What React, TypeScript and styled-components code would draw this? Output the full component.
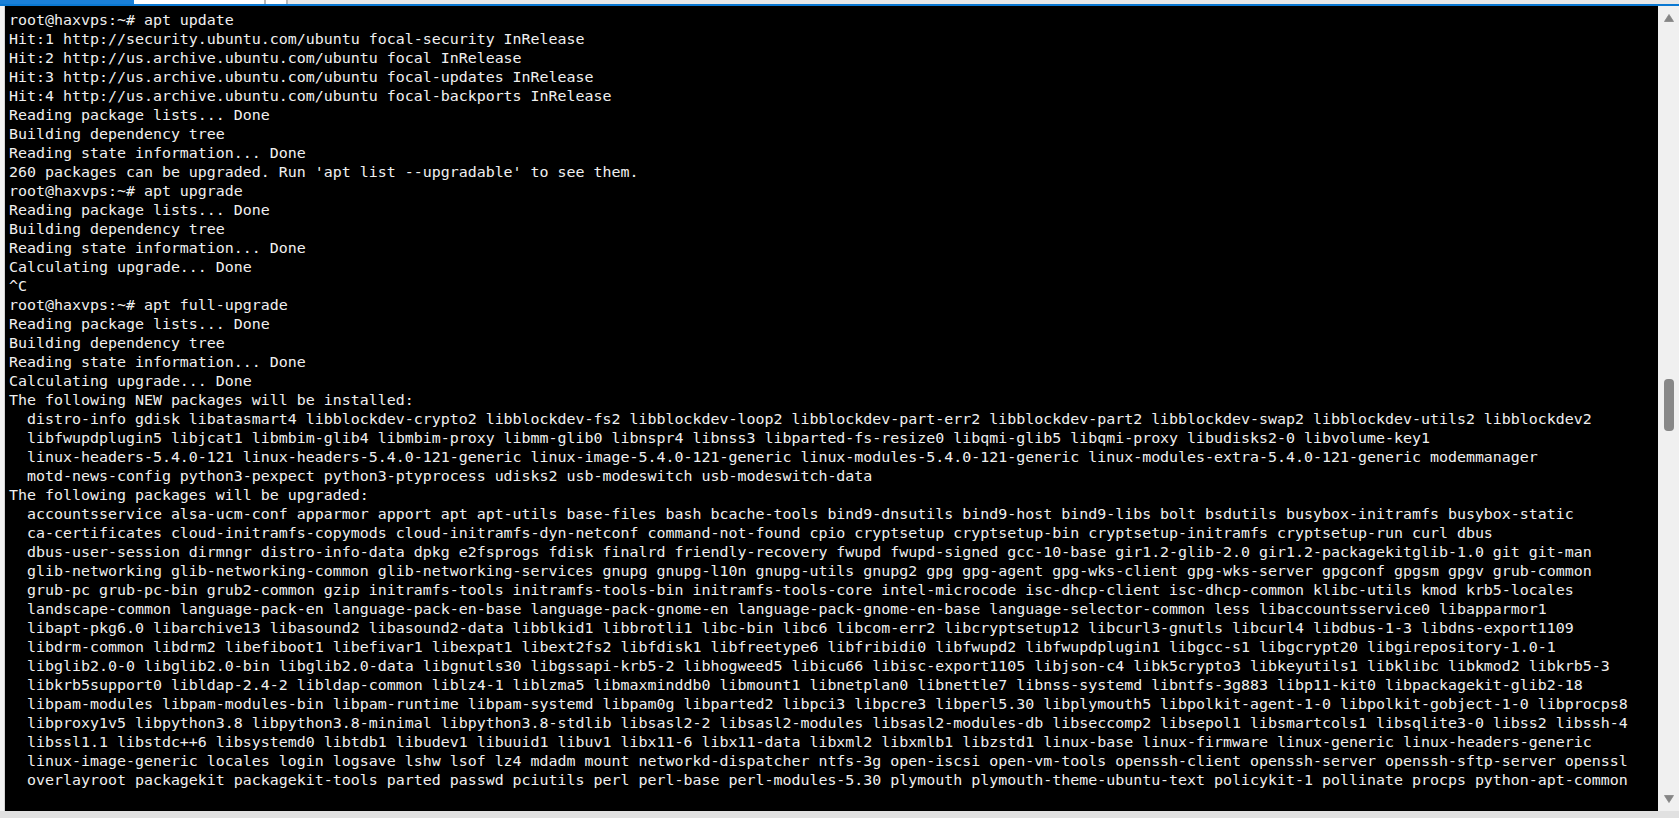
import React from "react";
import styled, { createGlobalStyle } from "styled-components";

const GlobalStyle = createGlobalStyle`
  html, body {
    margin: 0;
    padding: 0;
    width: 100%;
    height: 100%;
    overflow: hidden;
    background: #f0f0f0;
  }
  #root {
    height: 100%;
  }
`;

const Window = styled.div`
  display: flex;
  flex-direction: column;
  width: 1679px;
  height: 818px;
  background: #f0f0f0;
`;

const TabStrip = styled.div`
  display: flex;
  height: 4px;
  background: #e8e8e8;
  border-bottom: 2px solid #0a78d2;
`;

const Tab = styled.div<{ $active?: boolean; $w: number }>`
  width: ${(p) => p.$w}px;
  height: 100%;
  background: ${(p) => (p.$active ? "#1a80d8" : "#ffffff")};
  border-right: 2px solid ${(p) => (p.$active ? "#ffffff" : "#b9b9b9")};
  box-sizing: border-box;
`;

const Body = styled.div`
  flex: 1;
  display: flex;
  min-height: 0;
`;

const Gutter = styled.div`
  width: 4px;
  background: #f3f3f3;
  border-right: 1px solid #d4d4d4;
`;

const Terminal = styled.div`
  flex: 1;
  background: #000000;
  padding: 5px 0 0 4px;
  overflow: hidden;
  min-width: 0;
`;

const Line = styled.div`
  font-family: "DejaVu Sans Mono", "Liberation Mono", monospace;
  font-size: 14.95px;
  line-height: 19px;
  height: 19px;
  color: #f0f0f0;
  white-space: pre;
`;

const ScrollBar = styled.div`
  width: 21px;
  background: #f0f0f0;
  display: flex;
  flex-direction: column;
  align-items: center;
`;

const ArrowButton = styled.div`
  height: 24px;
  width: 21px;
  display: flex;
  align-items: center;
  justify-content: center;
  padding-left: 1px;
  box-sizing: border-box;
`;

const Track = styled.div`
  flex: 1;
  width: 100%;
  display: flex;
  flex-direction: column;
  align-items: center;
`;

const Thumb = styled.div<{ $top: number; $h: number }>`
  margin-top: ${(p) => p.$top}px;
  width: 10px;
  height: ${(p) => p.$h}px;
  border-radius: 4px;
  background: #878787;
  margin-left: 1px;
`;

const StatusStrip = styled.div`
  height: 7px;
  background: #e1e1e1;
`;

const Arrow = ({ down }: { down?: boolean }) => (
  <svg width="10" height="8" viewBox="0 0 10 8">
    {down ? (
      <path d="M0.5 0.5 L9.5 0.5 L5 7.5 Z" fill="#858585" stroke="#858585" strokeWidth="0.8" strokeLinejoin="round" />
    ) : (
      <path d="M0.5 7.5 L9.5 7.5 L5 0.5 Z" fill="#858585" stroke="#858585" strokeWidth="0.8" strokeLinejoin="round" />
    )}
  </svg>
);

const lines: string[] = [
  "root@haxvps:~# apt update",
  "Hit:1 http://security.ubuntu.com/ubuntu focal-security InRelease",
  "Hit:2 http://us.archive.ubuntu.com/ubuntu focal InRelease",
  "Hit:3 http://us.archive.ubuntu.com/ubuntu focal-updates InRelease",
  "Hit:4 http://us.archive.ubuntu.com/ubuntu focal-backports InRelease",
  "Reading package lists... Done",
  "Building dependency tree",
  "Reading state information... Done",
  "260 packages can be upgraded. Run 'apt list --upgradable' to see them.",
  "root@haxvps:~# apt upgrade",
  "Reading package lists... Done",
  "Building dependency tree",
  "Reading state information... Done",
  "Calculating upgrade... Done",
  "^C",
  "root@haxvps:~# apt full-upgrade",
  "Reading package lists... Done",
  "Building dependency tree",
  "Reading state information... Done",
  "Calculating upgrade... Done",
  "The following NEW packages will be installed:",
  "  distro-info gdisk libatasmart4 libblockdev-crypto2 libblockdev-fs2 libblockdev-loop2 libblockdev-part-err2 libblockdev-part2 libblockdev-swap2 libblockdev-utils2 libblockdev2",
  "  libfwupdplugin5 libjcat1 libmbim-glib4 libmbim-proxy libmm-glib0 libnspr4 libnss3 libparted-fs-resize0 libqmi-glib5 libqmi-proxy libudisks2-0 libvolume-key1",
  "  linux-headers-5.4.0-121 linux-headers-5.4.0-121-generic linux-image-5.4.0-121-generic linux-modules-5.4.0-121-generic linux-modules-extra-5.4.0-121-generic modemmanager",
  "  motd-news-config python3-pexpect python3-ptyprocess udisks2 usb-modeswitch usb-modeswitch-data",
  "The following packages will be upgraded:",
  "  accountsservice alsa-ucm-conf apparmor apport apt apt-utils base-files bash bcache-tools bind9-dnsutils bind9-host bind9-libs bolt bsdutils busybox-initramfs busybox-static",
  "  ca-certificates cloud-initramfs-copymods cloud-initramfs-dyn-netconf command-not-found cpio cryptsetup cryptsetup-bin cryptsetup-initramfs cryptsetup-run curl dbus",
  "  dbus-user-session dirmngr distro-info-data dpkg e2fsprogs fdisk finalrd friendly-recovery fwupd fwupd-signed gcc-10-base gir1.2-glib-2.0 gir1.2-packagekitglib-1.0 git git-man",
  "  glib-networking glib-networking-common glib-networking-services gnupg gnupg-l10n gnupg-utils gnupg2 gpg gpg-agent gpg-wks-client gpg-wks-server gpgconf gpgsm gpgv grub-common",
  "  grub-pc grub-pc-bin grub2-common gzip initramfs-tools initramfs-tools-bin initramfs-tools-core intel-microcode isc-dhcp-client isc-dhcp-common klibc-utils kmod krb5-locales",
  "  landscape-common language-pack-en language-pack-en-base language-pack-gnome-en language-pack-gnome-en-base language-selector-common less libaccountsservice0 libapparmor1",
  "  libapt-pkg6.0 libarchive13 libasound2 libasound2-data libblkid1 libbrotli1 libc-bin libc6 libcom-err2 libcryptsetup12 libcurl3-gnutls libcurl4 libdbus-1-3 libdns-export1109",
  "  libdrm-common libdrm2 libefiboot1 libefivar1 libexpat1 libext2fs2 libfdisk1 libfreetype6 libfribidi0 libfwupd2 libfwupdplugin1 libgcc-s1 libgcrypt20 libgirepository-1.0-1",
  "  libglib2.0-0 libglib2.0-bin libglib2.0-data libgnutls30 libgssapi-krb5-2 libhogweed5 libicu66 libisc-export1105 libjson-c4 libk5crypto3 libkeyutils1 libklibc libkmod2 libkrb5-3",
  "  libkrb5support0 libldap-2.4-2 libldap-common liblz4-1 liblzma5 libmaxminddb0 libmount1 libnetplan0 libnettle7 libnss-systemd libntfs-3g883 libp11-kit0 libpackagekit-glib2-18",
  "  libpam-modules libpam-modules-bin libpam-runtime libpam-systemd libpam0g libparted2 libpci3 libpcre3 libperl5.30 libplymouth5 libpolkit-agent-1-0 libpolkit-gobject-1-0 libprocps8",
  "  libproxy1v5 libpython3.8 libpython3.8-minimal libpython3.8-stdlib libsasl2-2 libsasl2-modules libsasl2-modules-db libseccomp2 libsepol1 libsmartcols1 libsqlite3-0 libss2 libssh-4",
  "  libssl1.1 libstdc++6 libsystemd0 libtdb1 libudev1 libuuid1 libuv1 libx11-6 libx11-data libxml2 libxmlb1 libzstd1 linux-base linux-firmware linux-generic linux-headers-generic",
  "  linux-image-generic locales login logsave lshw lsof lz4 mdadm mount networkd-dispatcher ntfs-3g open-iscsi open-vm-tools openssh-client openssh-server openssh-sftp-server openssl",
  "  overlayroot packagekit packagekit-tools parted passwd pciutils perl perl-base perl-modules-5.30 plymouth plymouth-theme-ubuntu-text policykit-1 pollinate procps python-apt-common",
];

export default function App() {
  return (
    <>
      <GlobalStyle />
      <Window>
        <TabStrip>
          <Tab $active $w={136} />
          <Tab $w={130} />
          <Tab $w={22} />
        </TabStrip>
        <Body>
          <Gutter />
          <Terminal>
            {lines.map((l, i) => (
              <Line key={i}>{l}</Line>
            ))}
          </Terminal>
          <ScrollBar>
            <ArrowButton>
              <Arrow />
            </ArrowButton>
            <Track>
              <Thumb $top={349} $h={52} />
            </Track>
            <ArrowButton>
              <Arrow down />
            </ArrowButton>
          </ScrollBar>
        </Body>
        <StatusStrip />
      </Window>
    </>
  );
}
